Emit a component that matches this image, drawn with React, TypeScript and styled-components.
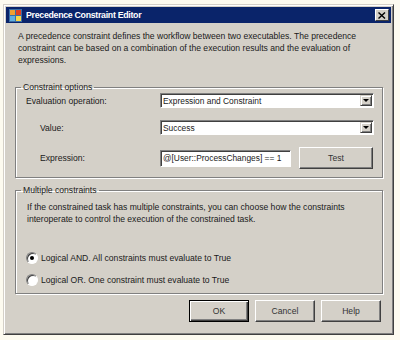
import styled, { createGlobalStyle } from 'styled-components';

const GlobalStyle = createGlobalStyle`
  body {
    margin: 0;
    background: #fdfbf0;
    font-family: "Liberation Sans", Arial, sans-serif;
  }
`;

const Page = styled.div`
  padding: 4px 0 0 3px;
`;

const Window = styled.div`
  width: 391px;
  height: 331px;
  box-sizing: border-box;
  background: #d4d0c8;
  border: 1px solid;
  border-color: #d4d0c8 #404040 #404040 #d4d0c8;
  box-shadow: inset 1px 1px 0 #fff, inset -1px -1px 0 #808080;
  padding: 2px;
  display: flex;
  flex-direction: column;
  font-size: 8.6px;
  color: #1a1a1a;
`;

const TitleBar = styled.div`
  height: 16px;
  background: #0a246a;
  display: flex;
  align-items: center;
  padding: 0 2px 0 3px;
  gap: 4px;
`;

const Title = styled.div`
  flex: 1;
  color: #fff;
  font-weight: bold;
  font-size: 8.8px;
  letter-spacing: -0.3px;
`;

const CloseButton = styled.div`
  width: 14px;
  height: 12px;
  box-sizing: border-box;
  background: #d4d0c8;
  border: 1px solid;
  border-color: #fff #404040 #404040 #fff;
  display: flex;
  align-items: center;
  justify-content: center;
`;

const Body = styled.div`
  padding: 7px 9px 0 9px;
  display: flex;
  flex-direction: column;
`;

const Description = styled.p`
  margin: 0 0 0 3px;
  line-height: 12px;
  white-space: nowrap;
`;

const Group = styled.fieldset<{ $height: number; $top: number }>`
  margin: ${(p) => p.$top}px 0 0 0;
  padding: 0;
  height: ${(p) => p.$height}px;
  box-sizing: border-box;
  border: 1px solid #808080;
  box-shadow: 1px 1px 0 #fff, inset 1px 1px 0 #fff;
  width: 368px;
`;

const Legend = styled.legend`
  padding: 0 2px;
  margin-left: 5px;
  line-height: 10px;
`;

const FieldRow = styled.div<{ $mt: number }>`
  display: flex;
  align-items: center;
  margin-top: ${(p) => p.$mt}px;
`;

const FieldLabel = styled.div<{ $indent: number }>`
  width: ${(p) => 144 - p.$indent}px;
  padding-left: ${(p) => p.$indent}px;
`;

const Select = styled.div`
  width: 214px;
  height: 15px;
  box-sizing: border-box;
  background: #fff;
  border: 1px solid;
  border-color: #808080 #fff #fff #808080;
  box-shadow: inset 1px 1px 0 #404040;
  display: flex;
  align-items: center;
  padding-left: 2px;
`;

const SelectText = styled.span`
  flex: 1;
  font-size: 8.4px;
`;

const Arrow = styled.div`
  width: 12px;
  height: 11px;
  margin-right: 1px;
  box-sizing: border-box;
  background: #d4d0c8;
  border: 1px solid;
  border-color: #d4d0c8 #404040 #404040 #d4d0c8;
  box-shadow: inset 1px 1px 0 #fff, inset -1px -1px 0 #808080;
  display: flex;
  align-items: center;
  justify-content: center;
  &::after {
    content: '';
    border-left: 3px solid transparent;
    border-right: 3px solid transparent;
    border-top: 3px solid #000;
  }
`;

const TextBox = styled.div`
  width: 131px;
  height: 17px;
  box-sizing: border-box;
  background: #fff;
  border: 1px solid;
  border-color: #808080 #fff #fff #808080;
  box-shadow: inset 1px 1px 0 #404040;
  display: flex;
  align-items: center;
  padding-left: 2px;
  font-size: 8.4px;
`;

const Button = styled.div<{ $w: number; $h: number; $default?: boolean }>`
  width: ${(p) => p.$w}px;
  height: ${(p) => p.$h}px;
  box-sizing: border-box;
  background: #d4d0c8;
  border: 1px solid;
  border-color: ${(p) =>
    p.$default ? '#000' : '#fff #404040 #404040 #fff'};
  box-shadow: ${(p) =>
    p.$default
      ? 'inset 1px 1px 0 #fff, inset -1px -1px 0 #404040, inset -2px -2px 0 #808080'
      : 'inset -1px -1px 0 #808080'};
  display: flex;
  align-items: center;
  justify-content: center;
  color: #333;
`;

const TestButton = styled(Button)`
  margin-left: 8px;
`;

const GroupText = styled.p`
  margin: 6px 0 0 11px;
  line-height: 12px;
  white-space: nowrap;
`;

const RadioRow = styled.div<{ $mt: number }>`
  display: flex;
  align-items: center;
  gap: 3px;
  margin: ${(p) => p.$mt}px 0 0 10px;
`;

const Radio = styled.div<{ $checked?: boolean }>`
  width: 12px;
  height: 12px;
  box-sizing: border-box;
  border-radius: 50%;
  background: #fff;
  border: 1px solid;
  border-color: #808080 #fff #fff #808080;
  box-shadow: inset 1px 1px 0 #404040;
  display: flex;
  align-items: center;
  justify-content: center;
  &::after {
    content: '';
    width: 4px;
    height: 4px;
    border-radius: 50%;
    background: ${(p) => (p.$checked ? '#000' : 'transparent')};
  }
`;

const Footer = styled.div`
  display: flex;
  justify-content: flex-end;
  gap: 6px;
  margin: 6px 1px 0 0;
`;

function AppIcon() {
  return (
    <svg width="13" height="13" viewBox="0 0 13 13">
      <rect x="0" y="0" width="13" height="13" fill="#3a6ea5" />
      <rect x="1" y="1" width="5" height="5" fill="#f0a030" />
      <rect x="7" y="1" width="5" height="5" fill="#e04020" />
      <rect x="1" y="7" width="5" height="5" fill="#60b0e0" />
      <rect x="7" y="7" width="5" height="5" fill="#f8d848" />
    </svg>
  );
}

export default function App() {
  return (
    <Page>
      <GlobalStyle />
      <Window>
        <TitleBar>
          <AppIcon />
          <Title>Precedence Constraint Editor</Title>
          <CloseButton>
            <svg width="8" height="7" viewBox="0 0 8 7">
              <path d="M0.5 0.5 L7 6.5 M7 0.5 L0.5 6.5" stroke="#000" strokeWidth="1.4" />
            </svg>
          </CloseButton>
        </TitleBar>
        <Body>
          <Description>
            A precedence constraint defines the workflow between two executables. The precedence
            <br />
            constraint can be based on a combination of the execution results and the evaluation of
            <br />
            expressions.
          </Description>
          <Group $top={16} $height={96}>
            <Legend>Constraint options</Legend>
            <FieldRow $mt={1}>
              <FieldLabel $indent={10}>Evaluation operation:</FieldLabel>
              <Select>
                <SelectText>Expression and Constraint</SelectText>
                <Arrow />
              </Select>
            </FieldRow>
            <FieldRow $mt={12}>
              <FieldLabel $indent={24}>Value:</FieldLabel>
              <Select>
                <SelectText>Success</SelectText>
                <Arrow />
              </Select>
            </FieldRow>
            <FieldRow $mt={12}>
              <FieldLabel $indent={24}>Expression:</FieldLabel>
              <TextBox>@[User::ProcessChanges] == 1</TextBox>
              <TestButton $w={74} $h={22}>Test</TestButton>
            </FieldRow>
          </Group>
          <Group $top={7} $height={109}>
            <Legend>Multiple constraints</Legend>
            <GroupText>
              If the constrained task has multiple constraints, you can choose how the constraints
              <br />
              interoperate to control the execution of the constrained task.
            </GroupText>
            <RadioRow $mt={27}>
              <Radio $checked />
              Logical AND. All constraints must evaluate to True
            </RadioRow>
            <RadioRow $mt={10}>
              <Radio />
              Logical OR. One constraint must evaluate to True
            </RadioRow>
          </Group>
          <Footer>
            <Button $w={60} $h={22} $default>OK</Button>
            <Button $w={60} $h={22}>Cancel</Button>
            <Button $w={60} $h={22}>Help</Button>
          </Footer>
        </Body>
      </Window>
    </Page>
  );
}
